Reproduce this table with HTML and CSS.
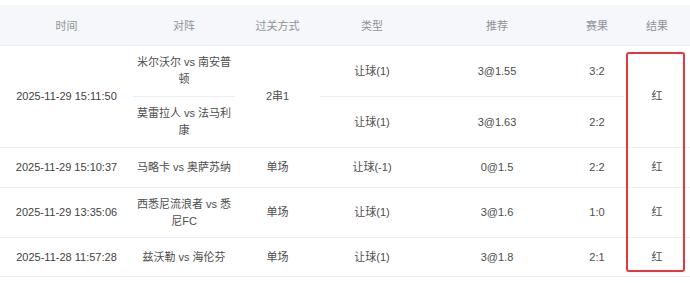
FILE: index.html
```html
<!DOCTYPE html>
<html lang="zh-CN">
<head>
<meta charset="utf-8">
<title>推荐记录</title>
<link rel="stylesheet" href="styles.css">
</head>
<body>
<div class="wrap">
  <table class="tbl">
    <colgroup>
      <col class="c-time"><col class="c-match"><col class="c-pass"><col class="c-type"><col class="c-rec"><col class="c-score"><col class="c-res">
    </colgroup>
    <thead>
      <tr class="head">
        <th>时间</th><th>对阵</th><th>过关方式</th><th>类型</th><th>推荐</th><th>赛果</th><th>结果</th>
      </tr>
    </thead>
    <tbody>
      <tr class="r-a">
        <td rowspan="2" class="date">2025-11-29 15:11:50</td>
        <td class="match">米尔沃尔 vs 南安普顿</td>
        <td rowspan="2">2串1</td>
        <td>让球(1)</td>
        <td>3@1.55</td>
        <td>3:2</td>
        <td rowspan="2">红</td>
      </tr>
      <tr class="r-b">
        <td class="match">莫雷拉人 vs 法马利康</td>
        <td>让球(1)</td>
        <td>3@1.63</td>
        <td>2:2</td>
      </tr>
      <tr class="r-s">
        <td class="date">2025-11-29 15:10:37</td>
        <td class="match">马略卡 vs 奥萨苏纳</td>
        <td>单场</td>
        <td>让球(-1)</td>
        <td>0@1.5</td>
        <td>2:2</td>
        <td>红</td>
      </tr>
      <tr class="r-d">
        <td class="date">2025-11-29 13:35:06</td>
        <td class="match">西悉尼流浪者 vs 悉尼FC</td>
        <td>单场</td>
        <td>让球(1)</td>
        <td>3@1.6</td>
        <td>1:0</td>
        <td>红</td>
      </tr>
      <tr class="r-l">
        <td class="date">2025-11-28 11:57:28</td>
        <td class="match">兹沃勒 vs 海伦芬</td>
        <td>单场</td>
        <td>让球(1)</td>
        <td>3@1.8</td>
        <td>2:1</td>
        <td>红</td>
      </tr>
    </tbody>
  </table>
  <div class="mark"></div>
</div>
</body>
</html>
```
FILE: styles.css
```css
html, body {
  margin: 0;
  padding: 0;
  background: #ffffff;
}
body {
  font-family: "Liberation Sans", "Noto Sans CJK SC", sans-serif;
  font-size: 11px;
  color: #4d4d4d;
}
.wrap {
  position: relative;
  padding-top: 5px;
}
.tbl {
  width: 690px;
  border-collapse: collapse;
  table-layout: fixed;
}
.c-time { width: 133px; }
.c-match { width: 102px; }
.c-pass { width: 85px; }
.c-type { width: 104px; }
.c-rec { width: 146px; }
.c-score { width: 54px; }
.c-res { width: 66px; }

.tbl th {
  background: #f5f7fa;
  color: #909399;
  font-weight: normal;
  height: 40px;
  padding: 0;
  border-bottom: 1px solid #ebeef5;
}
.tbl td {
  padding: 0 2px;
  text-align: center;
  vertical-align: middle;
  line-height: 17px;
  border-bottom: 1px solid #ebeef5;
}
.tbl td.date {
  color: #3f3f3f;
}
.r-a td, .r-b td { height: 50px; }
.r-s td { height: 39px; }
.r-d td { height: 49px; }
.r-l td { height: 38px; }

.mark {
  position: absolute;
  left: 626px;
  top: 52px;
  width: 55px;
  height: 216px;
  border: 2px solid #e8363c;
  border-radius: 3px;
}
```
